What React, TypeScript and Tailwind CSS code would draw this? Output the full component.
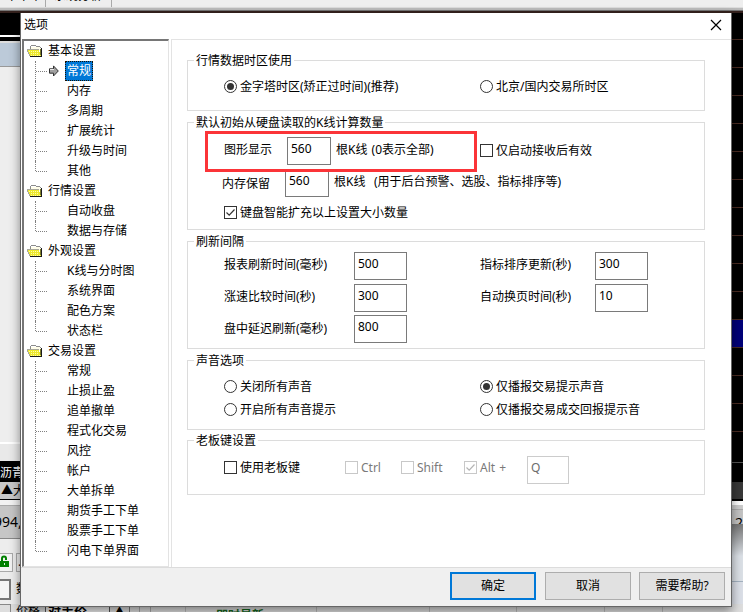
import type { ReactNode } from "react";

type TreeGroup = { title: string; items: string[] };

const tree: TreeGroup[] = [
  { title: "基本设置", items: ["常规", "内存", "多周期", "扩展统计", "升级与时间", "其他"] },
  { title: "行情设置", items: ["自动收盘", "数据与存储"] },
  { title: "外观设置", items: ["K线与分时图", "系统界面", "配色方案", "状态栏"] },
  {
    title: "交易设置",
    items: ["常规", "止损止盈", "追单撤单", "程式化交易", "风控", "帐户", "大单拆单", "期货手工下单", "股票手工下单", "闪电下单界面"],
  },
];

function FolderIcon() {
  return (
    <svg width="16" height="14" viewBox="0 0 16 14" shapeRendering="crispEdges" className="shrink-0">
      <path d="M3 3h10v4H3z" fill="#fffde8" />
      <path d="M4 1.5h5M9 2.5h4M3.5 2v3M13.500 3v1" stroke="#8c8c8c" />
      <path d="M1 6h11l2 6H3z" fill="#ece82c" />
      <path d="M1 5.5h11M.5 5v3M1.5 8v2M2.5 10v2" stroke="#a6a69c" />
      <path d="M2 7.5h10M4 9.5h8M4 11.5h9" stroke="#fffba8" strokeDasharray="1 1" />
      <path d="M3 12.5h12M14.5 4v9" stroke="#1c1c1c" />
      <path d="M13.5 5v6" stroke="#77772c" />
    </svg>
  );
}

function ArrowIcon() {
  return (
    <svg width="10" height="12" viewBox="0 0 10 12" className="shrink-0">
      <path d="M.5 3.8h4V.9L9.300 6l-4.800 5V8.200h-4z" fill="#a0a0a0" stroke="#333" strokeWidth="1" />
      <path d="M1 4.500h4" stroke="#e6e6e6" />
    </svg>
  );
}

function TreeItem({ label, last, selected }: { label: string; last: boolean; selected: boolean }) {
  return (
    <div className="flex h-5 items-center pl-[11px]">
      <div className={`w-px self-start border-l border-dotted border-[#808080] ${last ? "h-[10px]" : "h-5"}`} />
      <div className="w-[11px] border-t border-dotted border-[#808080]" />
      <div className="flex w-[18px] pl-[2px]">{selected && <ArrowIcon />}</div>
      {selected ? (
        <span className="h-5 border border-dotted border-[#1c1000] bg-[#0078d7] px-px leading-[18px] text-white">{label}</span>
      ) : (
        <span className="pl-[2px] leading-5">{label}</span>
      )}
    </div>
  );
}

function Tree() {
  return (
    <nav className="h-[528px] w-[147px] border-b border-l-2 border-r border-t-2 border-b-[#e3e3e3] border-l-[#767676] border-r-[#e3e3e3] border-t-[#767676] bg-white">
      {tree.map((g, gi) => (
        <div key={g.title}>
          <div className="flex h-5 items-center gap-[5px] pl-[3px]">
            <FolderIcon />
            <span>{g.title}</span>
          </div>
          {g.items.map((t, i) => (
            <TreeItem key={t} label={t} last={i === g.items.length - 1} selected={gi === 0 && i === 0} />
          ))}
        </div>
      ))}
    </nav>
  );
}

function Group({ title, className, children }: { title: string; className: string; children: ReactNode }) {
  return (
    <fieldset className={`w-[518px] border border-[#dcdcdc] ${className}`}>
      <legend className="ml-[6px] h-[17px] px-[2px] leading-[17px]">{title}</legend>
      {children}
    </fieldset>
  );
}

function Radio({ label, checked = false, className = "" }: { label: string; checked?: boolean; className?: string }) {
  return (
    <label className={`flex h-[17px] items-center gap-[3px] ${className}`}>
      <svg width="13" height="13" viewBox="0 0 13 13" className="shrink-0">
        <circle cx="6.5" cy="6.5" r="6" fill="white" stroke="#333" />
        {checked && <circle cx="6.5" cy="6.5" r="3.5" fill="#333" />}
      </svg>
      <span>{label}</span>
    </label>
  );
}

function Check({ label, checked = false, disabled = false, className = "" }: { label: ReactNode; checked?: boolean; disabled?: boolean; className?: string }) {
  const color = disabled ? "#c8c8c8" : "#333333";
  return (
    <label className={`flex h-[17px] items-center gap-[3px] ${disabled ? "text-[#7a7a7a]" : ""} ${className}`}>
      <svg width="13" height="13" viewBox="0 0 13 13" className="shrink-0">
        <rect x=".5" y=".5" width="12" height="12" fill="white" stroke={color} />
        {checked && <path d="M2.500 6.500l2.700 2.700 5.300-5.700" fill="none" stroke={disabled ? "#b4b4b4" : color} strokeWidth="1.200" />}
      </svg>
      <span>{label}</span>
    </label>
  );
}

function Field({ value, className = "", disabled = false }: { value: string; className?: string; disabled?: boolean }) {
  return (
    <div className={`h-7 shrink-0 border bg-white pl-[3px] leading-[21px] ${disabled ? "border-[#cccccc] text-[#6d6d6d]" : "border-[#7a7a7a]"} ${className}`}>
      {value}
    </div>
  );
}

function IntervalRow({ left, leftValue, right, rightValue }: { left: string; leftValue: string; right?: string; rightValue?: string }) {
  return (
    <div className="flex h-7 pl-9">
      <span className={`w-[130px] ${right ? "leading-[26px]" : "leading-[28px]"}`}>{left}</span>
      <Field value={leftValue} className="w-[53px]" />
      {right && rightValue && (
        <>
          <span className="ml-[73px] w-[115px] leading-[26px]">{right}</span>
          <Field value={rightValue} className="w-[53px]" />
        </>
      )}
    </div>
  );
}

function Settings() {
  return (
    <main className="h-[528px] w-[560px] border-l border-t border-[#e3e3e3] bg-white pl-[15px] pt-3">
      <Group title="行情数据时区使用" className="h-[59px]">
        <div className="flex pl-9 pt-[9px]">
          <Radio label="金字塔时区(矫正过时间)(推荐)" checked className="w-[256px]" />
          <Radio label="北京/国内交易所时区" />
        </div>
      </Group>
      <Group title="默认初始从硬盘读取的K线计算数量" className="relative mt-[3px] h-[116px]">
        <div className="absolute left-[17px] top-0 h-[41px] w-[272px] border-[3px] border-[#fb3438]" />
        <div className="mt-[6px] flex h-7 pl-9">
          <span className="w-[63px] leading-[26px]">图形显示</span>
          <Field value="560" className="w-11" />
          <span className="w-[149px] pl-[5px] leading-[26px]">根K线&nbsp;<span className="pl-px">(0表示全部)</span></span>
          <Check label="仅启动接收后有效" className="mt-[5px]" />
        </div>
        <div className="mt-1 flex h-7 pl-[34px]">
          <span className="w-[63px] leading-[30px]">内存保留</span>
          <Field value="560" className="w-11" />
          <span className="w-10 pl-[5px] leading-[26px]">根K线</span>
          <span className="pl-[5px] leading-[26px]">(用于后台预警、选股、指标排序等)</span>
        </div>
        <Check label="键盘智能扩充以上设置大小数量" checked className="ml-9 mt-[7px]" />
      </Group>
      <Group title="刷新间隔" className="mt-[3px] h-[116px]">
        <div className="mt-[2px] flex flex-col">
          <IntervalRow left="报表刷新时间(毫秒)" leftValue="500" right="指标排序更新(秒)" rightValue="300" />
          <div className="h-1" />
          <IntervalRow left="涨速比较时间(秒)" leftValue="300" right="自动换页时间(秒)" rightValue="10" />
          <div className="h-[3px]" />
          <IntervalRow left="盘中延迟刷新(毫秒)" leftValue="800" />
        </div>
      </Group>
      <Group title="声音选项" className="mt-[3px] h-[78px]">
        <div className="grid grid-cols-[256px_auto] gap-y-[6px] pl-9 pt-[9px]">
          <Radio label="关闭所有声音" />
          <Radio label="仅播报交易提示声音" checked />
          <Radio label="开启所有声音提示" />
          <Radio label="仅播报交易成交回报提示音" />
        </div>
      </Group>
      <Group title="老板键设置" className="mt-[2px] h-[63px]">
        <div className="mt-[7px] flex pl-9">
          <Check label="使用老板键" className="mt-[3px] w-[121px]" />
          <Check label="Ctrl" disabled className="mt-[3px] w-14" />
          <Check label="Shift" disabled className="mt-[3px] w-[63px]" />
          <Check label={<>Alt <span className="pl-px">+</span></>} disabled checked className="mt-[3px] w-[63px]" />
          <Field value="Q" disabled className="w-[42px]" />
        </div>
      </Group>
    </main>
  );
}

function DialogButton({ label, primary = false }: { label: string; primary?: boolean }) {
  return (
    <button className={`h-7 w-[86px] bg-[#e1e1e1] ${primary ? "border-2 border-[#0078d7]" : "border border-[#adadad]"}`}>{label}</button>
  );
}

function Dialog() {
  return (
    <section className="absolute left-[20px] top-[13px] flex h-[594px] w-[712px] flex-col border-b border-l border-r border-[#666] bg-[#f0f0f0] shadow-[0_4px_10px_rgba(0,0,0,0.45)]">
      <header className="flex h-[26px] shrink-0 items-center justify-between bg-white pl-[3px] pr-[9px]">
        <span className="pb-[3px]">选项</span>
        <svg width="12" height="12" viewBox="0 0 12 12" className="mb-[2px]">
          <path d="M1 1l10 10M11 1L1 11" stroke="#000" strokeWidth="1.200" />
        </svg>
      </header>
      <div className="flex h-[529px] shrink-0 justify-between border-b border-[#dcdcdc] bg-white pl-px">
        <Tree />
        <Settings />
      </div>
      <footer className="flex items-center gap-2 pl-[429px] pt-1">
        <DialogButton label="确定" primary />
        <div className="-ml-px flex gap-2 pl-[2px]">
          <DialogButton label="取消" />
          <DialogButton label="需要帮助?" />
        </div>
      </footer>
    </section>
  );
}

function LeftBackdrop() {
  return (
    <div className="flex w-[60px] flex-col whitespace-nowrap *:shrink-0">
      <div className="h-[22px] bg-black" />
      <div className="h-[2px] bg-white" />
      <div className="h-[4px] bg-black" />
      <div className="h-[2px] bg-[#ddd]" />
      <div className="h-[24px] border-b border-[#999] bg-[#bccad9]" />
      <div className="h-[375px] bg-[#eeeeee]" />
      <div className="h-[19px] border-t-2 border-white bg-[#e9e9e9]" />
      <div className="h-[21px] border-t-4 border-black bg-black leading-[15px] text-white">沥青</div>
      <div className="h-[18px] border-b border-black bg-[#c8c8c8] pl-[1px] leading-[17px]">▲大</div>
      <div className="h-[6px] border-b border-[#aaa] bg-[#f2f2f2]" />
      <div className="h-[33px] border-b border-[#888] bg-[#c6c6c6] text-[14px] leading-[32px]">
        <span className="-ml-[6px]">994,1</span>
      </div>
      <div className="h-[14px] bg-[#ededed]" />
      <div className="flex h-[19px] gap-[3px] bg-[#ededed]">
        <div className="w-[13px] border-b border-r border-t border-[#aaa] bg-[#f3f3f3]">
          <svg width="10" height="15" viewBox="0 0 10 15">
            <path d="M2 8V4.500q0-2 2-2t2 2V6" fill="none" stroke="#008000" strokeWidth="2" />
            <path d="M0 7h9v6H0z" fill="#008000" />
            <path d="M4 9h1v2H4z" fill="#d9f3d9" />
          </svg>
        </div>
        <div className="w-9 border border-[#aaa] pl-px">..</div>
      </div>
      <div className="h-[7px] bg-[#ededed]" />
      <div className="flex h-[22px] gap-[5px] bg-[#ededed]">
        <div className="h-[21px] w-[11px] border-2 border-l-0 border-[#777] bg-[#f5f5f5]" />
        <span className="leading-5">数量</span>
      </div>
      <div className="h-[3px] bg-[#ededed]" />
    </div>
  );
}

function RightBackdrop() {
  return (
    <div className="flex w-[12px] flex-col *:shrink-0">
      <div className="h-[26px] bg-black" />
      {Array.from({ length: 15 }, (_, i) => (
        <div key={i} className={`h-7 border-t border-[#4a2b22] ${i === 10 ? "bg-[#000078]" : "bg-black"}`} />
      ))}
      <div className="h-[3px] bg-black" />
      <div className="h-[20px] border-t border-[#555] bg-black" />
      <div className="h-[17px] bg-[#383838]" />
      <div className="h-[2px] bg-black" />
      <div className="h-[9px] border-b border-t-4 border-b-[#aaa] border-t-white bg-[#ccc]" />
      <div className="h-[14px] bg-[#c4c4c4] text-right text-[14px] leading-[26px]">2</div>
      <div className="h-[32px] bg-gradient-to-b from-[#777] to-[#dce1e7]" />
      <div className="h-[26px] border-b border-[#a4b2c0] bg-[#dce1e7]" />
      <div className="h-[22px] bg-[#dce0e8]" />
    </div>
  );
}

function BottomBackdrop() {
  return (
    <div className="flex h-[8px] bg-[#dedede] leading-[14px]">
      <div className="w-[11px] shrink-0 border-r border-t border-[#888]" />
      <span className="w-[34px] shrink-0 pl-[5px]">价格</span>
      <div className="w-[65px] shrink-0 border-l border-r border-[#555] bg-[#eee] pl-[2px] text-[13px] font-bold leading-[14px]">对手价</div>
      <div className="w-[20px] shrink-0 border-r border-[#777] pt-[2px] text-center text-[7px] leading-[8px]">▲</div>
      <div className="w-[10px] shrink-0 border-r border-[#aaa]" />
      <div className="w-[11px] shrink-0 border-r border-[#aaa]" />
      <div className="w-[35px] shrink-0 border-r border-[#bbb]" />
      <span className="w-[131px] shrink-0 border-r border-[#bbb] pl-[30px] font-bold leading-[24px] text-[#14661d]">即时最新</span>
      <div className="w-[113px] shrink-0 border-r border-[#bbb]" />
      <div className="w-[87px] shrink-0 border-r border-[#bbb]" />
      <div className="w-[88px] shrink-0 border-r border-[#bbb]" />
      <div className="w-[58px] shrink-0 border-r border-[#bbb]" />
    </div>
  );
}

export default function App() {
  return (
    <div className="relative flex h-[612px] w-[743px] flex-col overflow-hidden bg-[#eee] font-['Noto_Sans','Noto_Sans_CJK_SC',sans-serif] text-[12px] leading-[16px] text-black">
      <div className="flex h-[13px] shrink-0 flex-col bg-[#eeeeee]">
        <div className="flex h-[8px] border-b border-[#ddd] leading-[2px]">
          <div className="h-[7px] w-[46px] shrink-0 border-r border-[#aaa] pl-[6px]">
            <span className="relative -top-[5px]">下下单</span>
          </div>
          <div className="h-[7px] w-[66px] shrink-0 border-r border-[#aaa] pl-[8px]">
            <span className="relative -top-[5px]">系统分析</span>
          </div>
        </div>
        <div className="h-[3px] border-b border-[#777] bg-[#bbb]" />
        <div className="h-[2px] bg-[#35221e]" />
      </div>
      <div className="flex h-[591px] shrink-0 justify-between">
        <LeftBackdrop />
        <RightBackdrop />
      </div>
      <BottomBackdrop />
      <Dialog />
    </div>
  );
}
